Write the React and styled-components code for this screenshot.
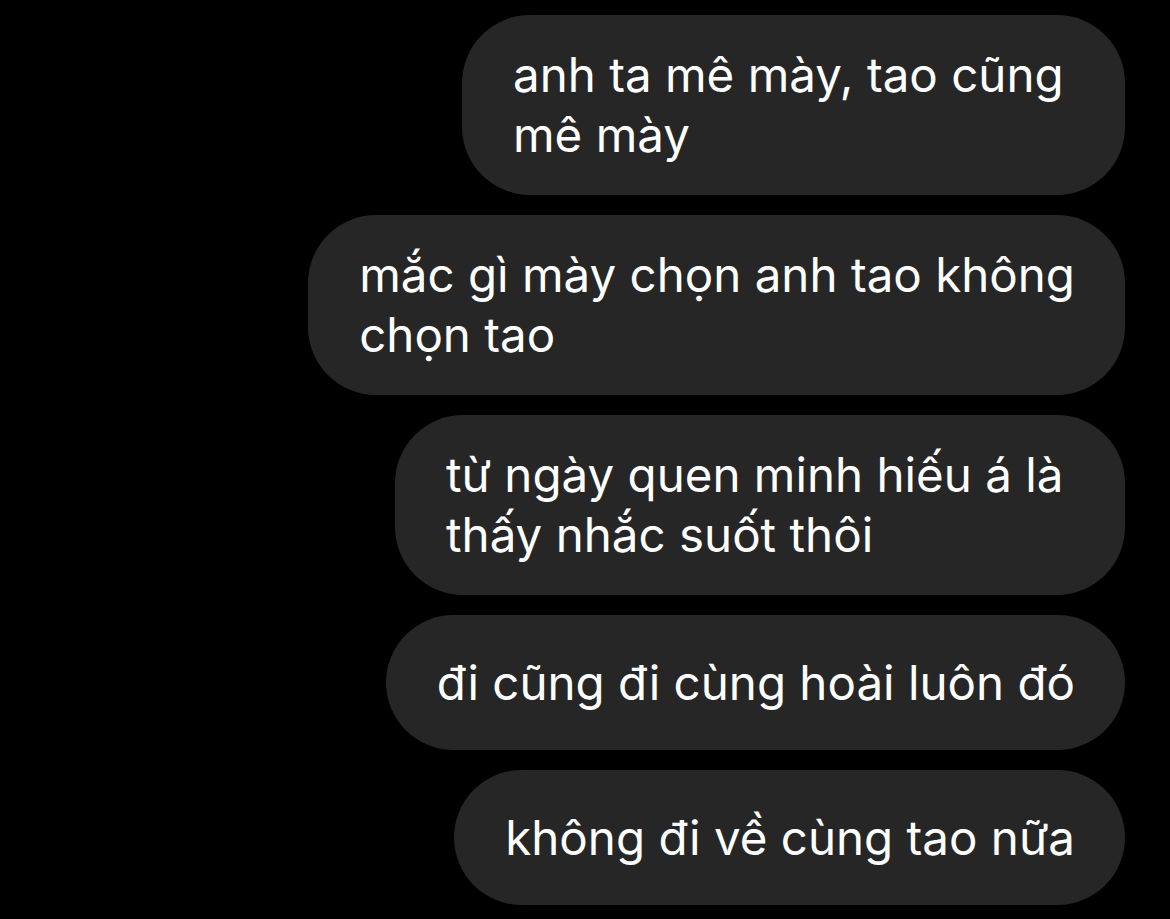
import React from 'react';
import styled, { createGlobalStyle } from 'styled-components';

const Global = createGlobalStyle`
  html, body {
    margin: 0;
    padding: 0;
    background: #000;
  }
  body {
    font-family: Inter, "Noto Sans", "Liberation Sans", sans-serif;
  }
`;

const Thread = styled.div`
  width: 1170px;
  height: 919px;
  box-sizing: border-box;
  padding: 15px 45px 0 0;
  display: flex;
  flex-direction: column;
  align-items: flex-end;
  gap: 20px;
  background: #000;
  overflow: hidden;
`;

const Bubble = styled.div`
  box-sizing: border-box;
  width: ${(p) => (p.$width ? p.$width + 'px' : 'auto')};
  min-height: 135px;
  padding: 30px 50px 30px 51px;
  display: flex;
  flex-direction: column;
  justify-content: center;
  background: #262626;
  border-radius: 68px;
  color: #fff;
  font-size: 47.5px;
  line-height: 60px;
  letter-spacing: 0;
  white-space: nowrap;
`;

const Line = styled.span`
  display: block;
`;

const messages = [
  { width: 663, lines: ['anh ta mê mày, tao cũng', 'mê mày'] },
  { lines: ['mắc gì mày chọn anh tao không', 'chọn tao'] },
  { width: 730, lines: ['từ ngày quen minh hiếu á là', 'thấy nhắc suốt thôi'] },
  { lines: ['đi cũng đi cùng hoài luôn đó'] },
  { lines: ['không đi về cùng tao nữa'] },
];

export default function App() {
  return (
    <>
      <Global />
      <Thread>
        {messages.map((m, i) => (
          <Bubble key={i} $width={m.width}>
            {m.lines.map((l, j) => (
              <Line key={j}>{l}</Line>
            ))}
          </Bubble>
        ))}
      </Thread>
    </>
  );
}
